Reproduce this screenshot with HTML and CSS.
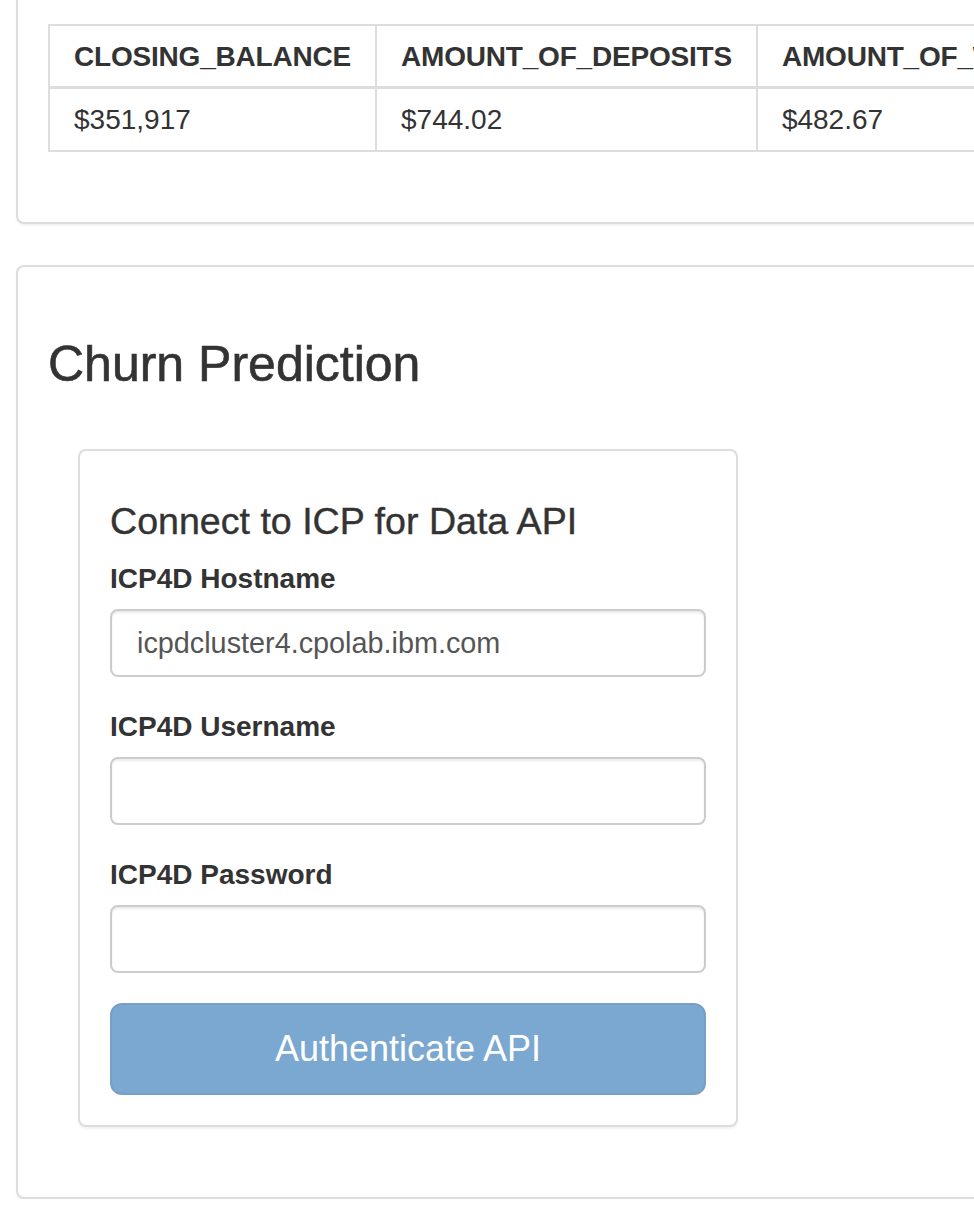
FILE: index.html
```html
<!DOCTYPE html>
<html lang="en">
<head>
<meta charset="utf-8">
<title>Churn Prediction</title>
<link rel="stylesheet" href="styles.css">
</head>
<body>
<div class="page">
  <section class="panel panel-data">
    <table class="data-table">
      <thead>
        <tr>
          <th>CLOSING_BALANCE</th>
          <th>AMOUNT_OF_DEPOSITS</th>
          <th>AMOUNT_OF_WITHDRAWALS</th>
          <th>AGE</th>
        </tr>
      </thead>
      <tbody>
        <tr>
          <td>$351,917</td>
          <td>$744.02</td>
          <td>$482.67</td>
          <td>42</td>
        </tr>
      </tbody>
    </table>
  </section>

  <section class="panel panel-churn">
    <h3 class="section-title">Churn Prediction</h3>
    <div class="connect-box">
      <h4 class="connect-title">Connect to ICP for Data API</h4>
      <form class="connect-form">
        <div class="form-group">
          <label class="form-label" for="host">ICP4D Hostname</label>
          <input class="form-control" id="host" type="text" value="icpdcluster4.cpolab.ibm.com">
        </div>
        <div class="form-group">
          <label class="form-label" for="user">ICP4D Username</label>
          <input class="form-control" id="user" type="text">
        </div>
        <div class="form-group">
          <label class="form-label" for="pass">ICP4D Password</label>
          <input class="form-control" id="pass" type="password">
        </div>
        <button class="btn-auth" type="button" disabled>Authenticate API</button>
      </form>
    </div>
  </section>
</div>
</body>
</html>
```

FILE: styles.css
```css
html, body {
  margin: 0;
  padding: 0;
  background: #fff;
  overflow: hidden;
}

body {
  font-family: "Liberation Sans", Arial, Helvetica, sans-serif;
  color: #333;
}

.page {
  width: 1400px;
  padding-left: 16px;
}

.panel {
  box-sizing: border-box;
  width: 1300px;
  background: #fff;
  border: 2px solid #ddd;
  border-radius: 8px;
  box-shadow: 0 2px 2px rgba(0, 0, 0, 0.05);
  padding: 30px;
}

.panel-data {
  margin-top: -8px;
  margin-bottom: 41px;
}

.data-table {
  border-collapse: separate;
  border-spacing: 0;
  border-top: 2px solid #ddd;
  border-left: 2px solid #ddd;
  margin-bottom: 40px;
  font-size: 28px;
  line-height: 40px;
  white-space: nowrap;
}

.data-table th,
.data-table td {
  border-right: 2px solid #ddd;
  border-bottom: 2px solid #ddd;
  text-align: left;
  padding: 11px 24px 10px;
}

.data-table th {
  font-weight: 700;
  letter-spacing: -0.2px;
  padding-bottom: 9px;
  border-bottom-width: 3px;
}

.section-title {
  font-size: 50px;
  font-weight: 400;
  line-height: 55px;
  margin: 40px 0 57px;
  color: #333;
  -webkit-text-stroke: 0.6px #333;
}

.connect-box {
  box-sizing: border-box;
  width: 660px;
  margin-left: 30px;
  margin-bottom: 40px;
  border: 2px solid #ddd;
  border-radius: 8px;
  box-shadow: 0 2px 2px rgba(0, 0, 0, 0.05);
  padding: 30px;
}

.connect-title {
  font-size: 37.6px;
  font-weight: 400;
  line-height: 40px;
  margin: 20px 0 18px;
  color: #333;
  -webkit-text-stroke: 0.4px #333;
}

.connect-form {
  margin: 0;
}

.form-group {
  margin-bottom: 30px;
}

.form-label {
  display: block;
  font-size: 28px;
  font-weight: 700;
  line-height: 40px;
  margin-bottom: 10px;
}

.form-control {
  display: block;
  box-sizing: border-box;
  width: 100%;
  height: 68px;
  padding: 0 25px;
  font-family: inherit;
  font-size: 28.8px;
  color: #555;
  background: #fff;
  border: 2px solid #ccc;
  border-radius: 8px;
  box-shadow: inset 0 2px 2px rgba(0, 0, 0, 0.075);
  outline: none;
}

.btn-auth {
  display: block;
  box-sizing: border-box;
  width: 100%;
  height: 92px;
  padding: 0;
  font-family: inherit;
  font-size: 36px;
  line-height: 48px;
  color: #fff;
  background: #7aa8d0;
  border: 2px solid #77a0c4;
  border-radius: 12px;
  cursor: not-allowed;
}
```
